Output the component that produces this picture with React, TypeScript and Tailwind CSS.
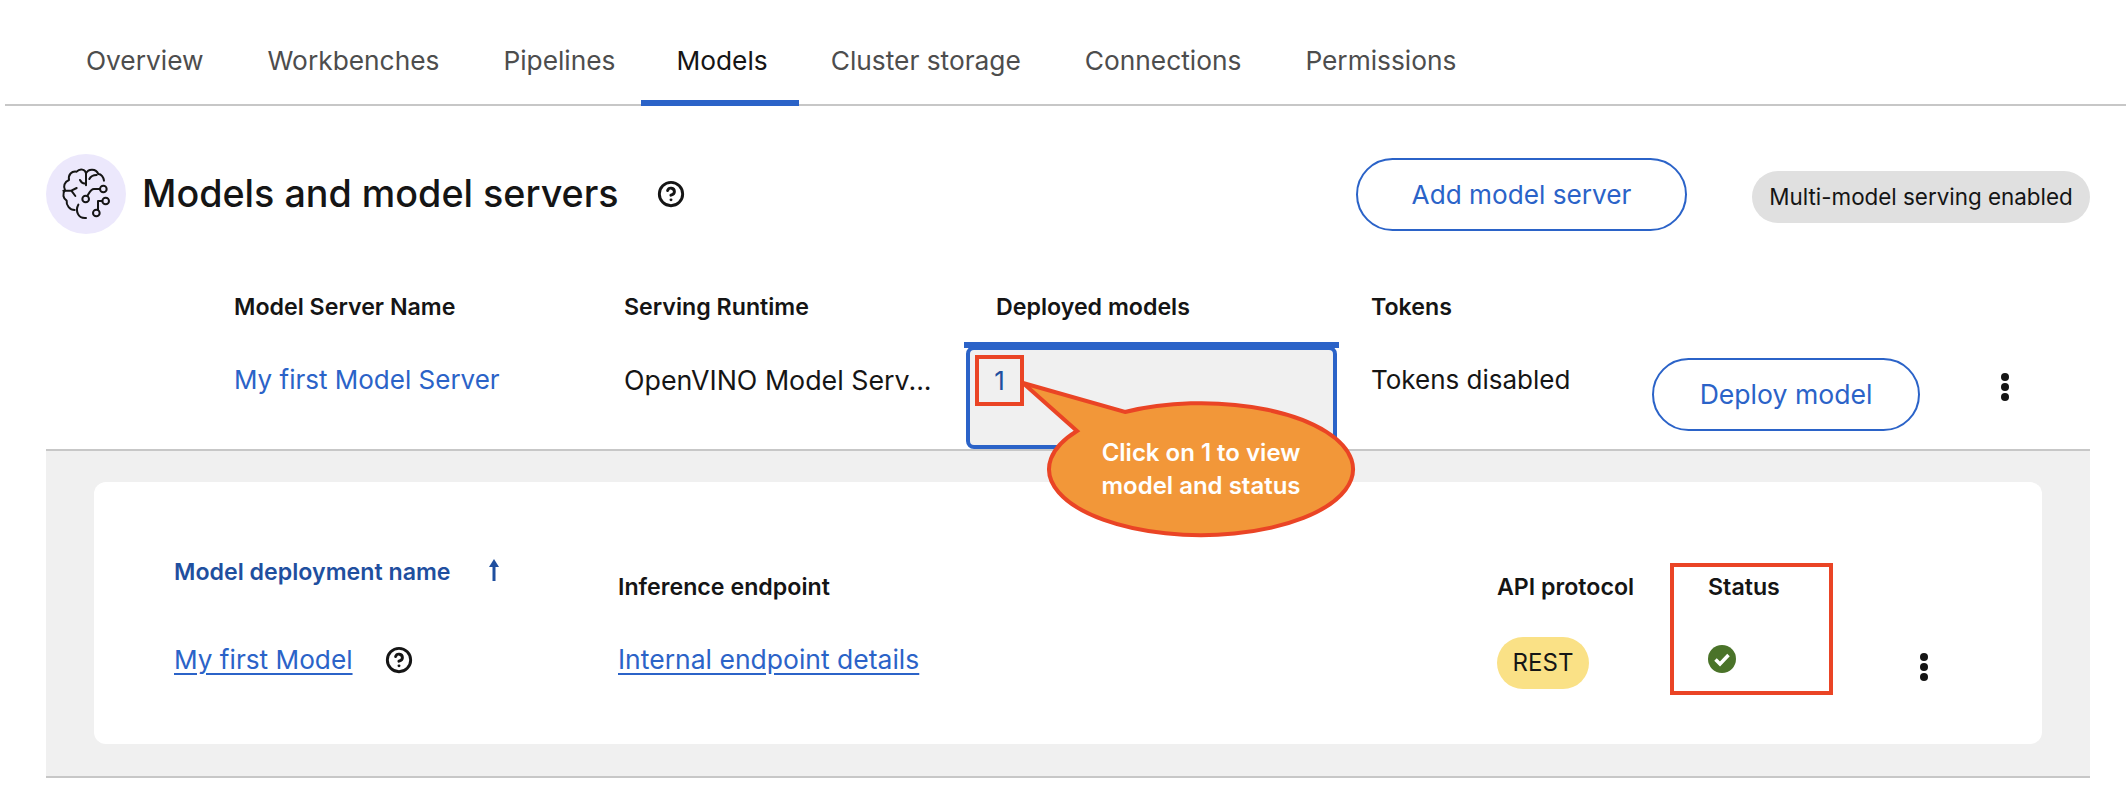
import { CircleHelp } from "lucide-react";

const tabs = ["Overview", "Workbenches", "Pipelines", "Models", "Cluster storage", "Connections", "Permissions"];

function BrainIcon() {
  return (
    <svg viewBox="48 72 240 240" className="h-20 w-20" fill="none" stroke="#151515" strokeWidth="6" strokeLinecap="round" strokeLinejoin="round">
      <path d="M168 166V130C166 118 150 114 140 125C125 122 114 134 117 150C103 155 99 170 105 180C96 191 100 206 110 212C108 226 120 240 134 240" />
      <path d="M168 130C175 115 198 115 205 132C214 132 221 142 222 152" />
      <path d="M150 150C154 158 160 162 168 160M200 135C190 135 182 139 178 147" />
      <path d="M100 182H124L140 174M124 182L136 198" />
      <path d="M145 224C136 240 142 266 168 264" />
      <path d="M210 177H192C182 177 178 188 172 198" />
      <circle cx="220" cy="177" r="10" />
      <circle cx="167" cy="207" r="10" />
      <circle cx="227" cy="213" r="10" />
      <circle cx="199" cy="249" r="10" />
      <path d="M217 213H204V239" />
    </svg>
  );
}

function Kebab() {
  return (
    <svg viewBox="0 0 10 30" className="h-[30px] w-[10px]" fill="#151515">
      <circle cx="5" cy="5" r="4" />
      <circle cx="5" cy="15" r="4" />
      <circle cx="5" cy="25" r="4" />
    </svg>
  );
}

function Callout() {
  return (
    <div className="absolute left-[1020px] top-[378px] h-[165px] w-[340px]">
      <svg viewBox="1020 378 340 165" className="absolute inset-0 h-full w-full">
        <path d="M1023 383L1125 412A152 66 0 1 1 1077 431Z" fill="#f29739" stroke="#ea4425" strokeWidth="4" />
      </svg>
      <div className="absolute left-[31px] top-[58px] w-[300px] text-center text-[24px] font-semibold leading-[33px] text-white">
        Click on 1 to view
        <br />
        model and status
      </div>
    </div>
  );
}

export default function App() {
  return (
    <div className="relative h-[796px] w-[2126px] overflow-hidden bg-white font-['Inter',sans-serif] text-[#151515]">
      <div className="ml-[5px] flex h-[106px] items-start border-b-2 border-[#c7c7c7] pl-[49px]">
        {tabs.map((tab) => (
          <div
            key={tab}
            className={
              tab === "Models"
                ? "-ml-[6px] flex h-[106px] items-center border-b-[6px] border-[#2b63c8] pl-[35px] pr-[31px] pt-[22px] text-[26.3px] text-[#151515]"
                : "flex h-[106px] items-center border-b-[6px] border-transparent px-[32px] pt-[22px] text-[26.3px] text-[#4d4d4d]"
            }
          >
            {tab}
          </div>
        ))}
      </div>

      <div className="ml-[46px] mr-[36px] mt-[48px] flex h-20 items-center">
        <div className="h-20 w-20 rounded-full bg-[#ece8fc]">
          <BrainIcon />
        </div>
        <h1 className="ml-[16px] text-[37.7px] font-medium leading-none">Models and model servers</h1>
        <CircleHelp className="ml-[38px] h-[28px] w-[28px]" strokeWidth={2.5} />
        <div className="ml-auto flex h-[73px] w-[331px] items-center justify-center rounded-full border-2 border-[#2b63c8] pt-[1px] text-[26.2px] text-[#2b63c8]">
          Add model server
        </div>
        <div className="ml-[65px] mt-[5px] flex h-[52px] w-[338px] items-center justify-center rounded-full bg-[#e0e0e0] text-[22.4px]">
          Multi-model serving enabled
        </div>
      </div>

      <div className="ml-[46px] mr-[36px] mt-[56px] flex h-[34px] items-center pl-[188px] text-[23.2px] font-semibold">
        <div className="w-[390px]">Model Server Name</div>
        <div className="w-[372px]">Serving Runtime</div>
        <div className="w-[375px]">Deployed models</div>
        <div>Tokens</div>
      </div>

      <div className="ml-[46px] mr-[36px] mt-[18px] flex h-[109px] items-start border-b-2 border-[#c7c7c7] pl-[188px] text-[26px]">
        <div className="w-[390px] pt-[18px] text-[#2b63c8]">My first Model Server</div>
        <div className="w-[340px] pt-[18px] text-[26.8px]">OpenVINO Model Serv...</div>
        <div className="w-[375px]">
          <div className="h-[6px] bg-[#2b63c8]" />
          <div className="mx-[2px] -mt-[2px] h-[103px] rounded-lg border-[4px] border-[#2b63c8] bg-[#f0f0f0] pl-[5px] pt-[5px]">
            <div className="flex h-[51px] w-[49px] items-center justify-center border-[4px] border-[#ea4425] text-[#1f4f9f]">1</div>
          </div>
        </div>
        <div className="ml-[32px] w-[281px] pt-[18px]">Tokens disabled</div>
        <div className="mt-[16px] flex h-[73px] w-[268px] items-center justify-center rounded-full border-2 border-[#2b63c8] text-[26.6px] text-[#2b63c8]">
          Deploy model
        </div>
        <div className="ml-[80px] mt-[30px]">
          <Kebab />
        </div>
      </div>

      <div className="ml-[46px] mr-[36px] h-[327px] border-b-2 border-[#c7c7c7] bg-[#f0f0f0] px-[48px] pt-[31px]">
        <div className="relative h-[262px] rounded-xl bg-white pl-[80px] pt-[70px]">
          <div className="grid grid-cols-[444px_879px_211px_211px_20px] grid-rows-[73px_70px]">
            <div className="flex items-start gap-[37px] pt-[3px] text-[23.2px] font-semibold text-[#1f4f9f]">
              <span>Model deployment name</span>
              <svg viewBox="0 0 12 22" className="mt-[4px] h-[22px] w-[12px]" fill="#1f4f9f">
                <path d="M6 0L11 8H7.5V22H4.5V8H1Z" />
              </svg>
            </div>
            <div className="pt-[18px] text-[23.2px] font-semibold">Inference endpoint</div>
            <div className="pt-[18px] text-[23.2px] font-semibold">API protocol</div>
            <div className="pt-[18px] text-[23.2px] font-semibold">Status</div>
            <div />

            <div className="flex items-center gap-[32px] text-[26.2px] text-[#2b63c8]">
              <span className="underline underline-offset-4">My first Model</span>
              <CircleHelp className="h-[28px] w-[28px] text-[#151515]" strokeWidth={2.5} />
            </div>
            <div className="flex items-center text-[26.5px] text-[#2b63c8] underline underline-offset-4">Internal endpoint details</div>
            <div className="flex items-center">
              <span className="mt-[6px] flex h-[52px] w-[92px] items-center justify-center rounded-full bg-[#fae186] text-[24px]">REST</span>
            </div>
            <div className="-mt-[2px] flex items-center">
              <svg viewBox="0 0 28 28" className="h-[28px] w-[28px]">
                <circle cx="14" cy="14" r="14" fill="#4a7329" />
                <path d="M7.5 14.5L12 19L20.5 10" fill="none" stroke="#fff" strokeWidth="3.5" />
              </svg>
            </div>
            <div className="flex items-center pt-[14px]">
              <Kebab />
            </div>
          </div>
          <div className="absolute left-[1576px] top-[81px] h-[132px] w-[163px] border-[4px] border-[#ea4425]" />
        </div>
      </div>

      <Callout />
    </div>
  );
}
